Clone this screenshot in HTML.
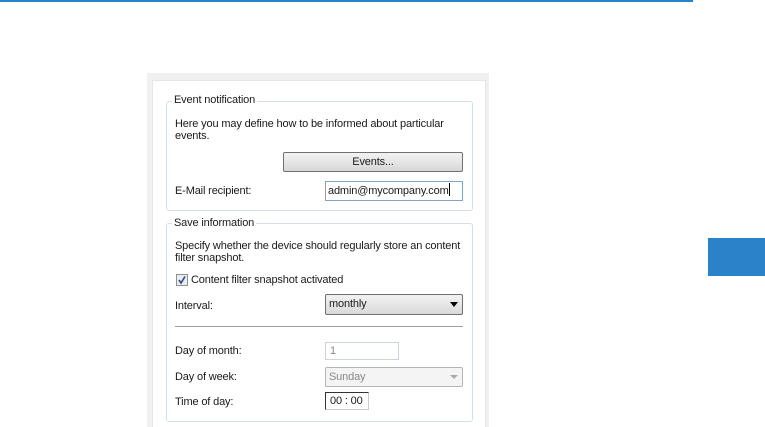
<!DOCTYPE html>
<html><head><style>
*{margin:0;padding:0;box-sizing:border-box}
body{width:765px;height:427px;background:#fff;position:relative;overflow:hidden;font-family:"Liberation Sans",sans-serif;font-size:11px;color:#1a1a1a;letter-spacing:-0.15px}
.a{position:absolute}
.gb{position:absolute;border:1px solid #d5dfe5;border-radius:3px}
.gt{position:absolute;background:#fff;padding:0 2px;line-height:12px}
.t{position:absolute;line-height:12px;white-space:nowrap}
</style></head><body>
<div class="a" style="left:0;top:0;width:693px;height:2px;background:#2a82c8"></div>
<div class="a" style="left:708px;top:238px;width:57px;height:38px;background:#2a82c8"></div>
<div class="a" style="left:147px;top:73px;width:342px;height:354px;background:#f0f0f0"></div>
<div class="a" style="left:152px;top:80px;width:334px;height:347px;background:#fff;border:1px solid #e3e8ec;border-bottom:none"></div>

<div class="gb" style="left:166px;top:101px;width:307px;height:110px"></div>
<div class="gt" style="left:172px;top:94px">Event notification</div>
<div class="t" style="left:175px;top:118px">Here you may define how to be informed about particular</div>
<div class="t" style="left:175px;top:130px">events.</div>
<div class="a" style="left:283px;top:152px;width:180px;height:20px;border:1px solid #707070;border-radius:2px;background:linear-gradient(#f2f2f2,#e6e6e6 50%,#d6d6d6);text-align:center;line-height:18px">Events...</div>
<div class="t" style="left:175px;top:185px">E-Mail recipient:</div>
<div class="a" style="left:325px;top:181px;width:138px;height:20px;border:1px solid #7fa6c9;padding-left:2px;line-height:18px">admin@mycompany.com<span style="display:inline-block;width:1px;height:13px;background:#000;vertical-align:-2px"></span></div>

<div class="gb" style="left:166px;top:223px;width:307px;height:199px"></div>
<div class="gt" style="left:172px;top:217px">Save information</div>
<div class="t" style="left:175px;top:240px">Specify whether the device should regularly store an content</div>
<div class="t" style="left:175px;top:252px">filter snapshot.</div>
<div class="a" style="left:176px;top:274px;width:12px;height:12px;border:1px solid #8f8f8f;background:#e8eef5"><svg width="10" height="10" viewBox="0 0 10 10" style="position:absolute;left:0;top:0"><path d="M2 5 L4 8 L8 1.5" stroke="#2d4a8a" stroke-width="1.6" fill="none"/></svg></div>
<div class="t" style="left:191px;top:274px">Content filter snapshot activated</div>
<div class="t" style="left:175px;top:300px">Interval:</div>
<div class="a" style="left:325px;top:294px;width:138px;height:21px;border:1px solid #707070;border-radius:2px;background:linear-gradient(#f2f2f2,#e6e6e6 50%,#d9d9d9);padding-left:3px;line-height:19px">monthly</div>
<div class="a" style="left:450px;top:302px;width:0;height:0;border-left:4px solid transparent;border-right:4px solid transparent;border-top:5px solid #000"></div>
<div class="a" style="left:175px;top:326px;width:288px;height:1px;background:#a0a0a0"></div>
<div class="t" style="left:175px;top:345px">Day of month:</div>
<div class="a" style="left:325px;top:342px;width:74px;height:18px;border:1px solid #c9d6e0;color:#888;padding-left:4px;line-height:16px">1</div>
<div class="t" style="left:175px;top:371px">Day of week:</div>
<div class="a" style="left:325px;top:367px;width:138px;height:20px;border:1px solid #b5b5b5;border-radius:2px;background:#f4f4f4;color:#888;padding-left:3px;line-height:18px">Sunday</div>
<div class="a" style="left:450px;top:375px;width:0;height:0;border-left:4px solid transparent;border-right:4px solid transparent;border-top:4px solid #aaa"></div>
<div class="t" style="left:175px;top:396px">Time of day:</div>
<div class="a" style="left:325px;top:392px;width:44px;height:18px;border:1px solid #333;border-right-color:#ccc;border-bottom-color:#ccc;color:#1a1a1a;padding-left:4px;line-height:16px">00 : 00</div>
</body></html>
